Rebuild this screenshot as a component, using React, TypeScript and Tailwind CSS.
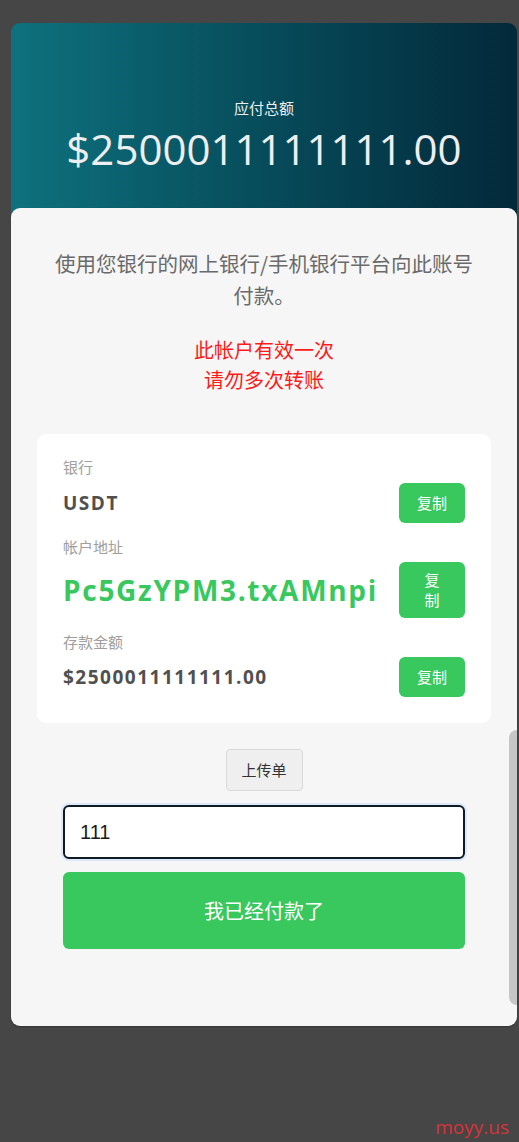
import React from "react";

const rows = [
  { label: "银行", value: "USDT", kind: "plain" },
  { label: "帐户地址", value: "Pc5GzYPM3.txAMnpi", kind: "address" },
  { label: "存款金额", value: "$2500011111111.00", kind: "plain" },
];

const cjk = "font-['Noto_Sans_CJK_SC',sans-serif]";

const CopyButton = ({ tall }: { tall?: boolean }) => (
  <button
    className={`shrink-0 w-[66px] ${tall ? "h-[56px]" : "h-[40px]"} rounded-[6px] bg-[#38c85d] text-white text-[15px] ${cjk} flex items-center justify-center`}
  >
    {tall ? <span className="block w-[16px] leading-[20px]">复制</span> : "复制"}
  </button>
);

const App = () => {
  return (
    <div className="relative min-h-[1142px] bg-[#464646] pt-[23px] pl-[11px] pr-[2px]">
      {/* amount header */}
      <div className="rounded-t-[9px] bg-gradient-to-r from-[#0e727e] to-[#03293a] pt-[75px] pb-[40px] text-center text-[#eeeeee]">
        <div className={`text-[15px] leading-5 ${cjk}`}>应付总额</div>
        <div className="mt-[5px] text-[42px] leading-[52px] font-['Open_Sans',sans-serif]">
          $2500011111111.00
        </div>
      </div>

      {/* main panel */}
      <div
        className={`relative -mt-[7px] rounded-[9px] bg-[#f6f6f6] px-[26px] pt-[39px] pb-[77px] ${cjk} shadow-[0_1px_2px_rgba(0,0,0,0.25)]`}
      >
        <p className="px-[14px] text-center text-[20.5px] leading-[32px] text-[#6a6a6a]">
          使用您银行的网上银行/手机银行平台向此账号付款。
        </p>
        <p className="mt-[24px] text-center text-[20px] leading-[30px] text-[#ff1a1a]">
          此帐户有效一次
          <br />
          请勿多次转账
        </p>

        <div className="mt-[39px] rounded-[9px] bg-white px-[26px] pt-[23px] pb-[26px]">
          {rows.map((r, i) => (
            <div key={r.label} className={i > 0 ? "mt-[14px]" : ""}>
              <div className="text-[15px] leading-5 text-[#9e9e9e]">{r.label}</div>
              <div
                className={`flex items-center gap-[15px] ${i === 0 ? "mt-[6px]" : "mt-[5px]"}`}
              >
                {r.kind === "address" ? (
                  <div className="min-w-0 flex-1 whitespace-nowrap text-[28px] leading-[40px] font-bold tracking-[1.7px] text-[#38c85d] font-['Open_Sans',sans-serif]">
                    {r.value}
                  </div>
                ) : (
                  <div className="min-w-0 flex-1 text-[19px] font-bold tracking-[1.5px] text-[#505050] font-['Open_Sans',sans-serif]">
                    {r.value}
                  </div>
                )}
                <CopyButton tall={r.kind === "address"} />
              </div>
            </div>
          ))}
        </div>

        <div className="mt-[26px] flex justify-center">
          <button className="h-[42px] w-[77px] rounded-[4px] border border-[#d9d9d9] bg-[#efefef] text-[15px] text-[#333]">
            上传单
          </button>
        </div>

        <div className="mt-[14px] px-[26px]">
          <input
            defaultValue="111"
            className="block h-[54px] w-full rounded-[6px] border-2 border-[#0f1a24] bg-white px-[15px] text-[20px] text-[#1a1a1a] font-['Liberation_Sans',sans-serif] outline-none shadow-[0_0_0_2px_#dbe9f8]"
          />
          <button className="mt-[13px] h-[77px] w-full rounded-[6px] bg-[#38c85d] text-[20px] text-white">
            我已经付款了
          </button>
        </div>

        {/* inner scroll thumb */}
        <div className="absolute right-0 top-[522px] h-[275px] w-[8px] rounded-l-[8px] bg-[#c6c6c6]" />
      </div>

      <div className="absolute right-[10px] bottom-[3px] text-[19px] leading-[24px] text-[#d8333a] font-['Open_Sans',sans-serif]">
        moyy.us
      </div>
    </div>
  );
};

export default App;
